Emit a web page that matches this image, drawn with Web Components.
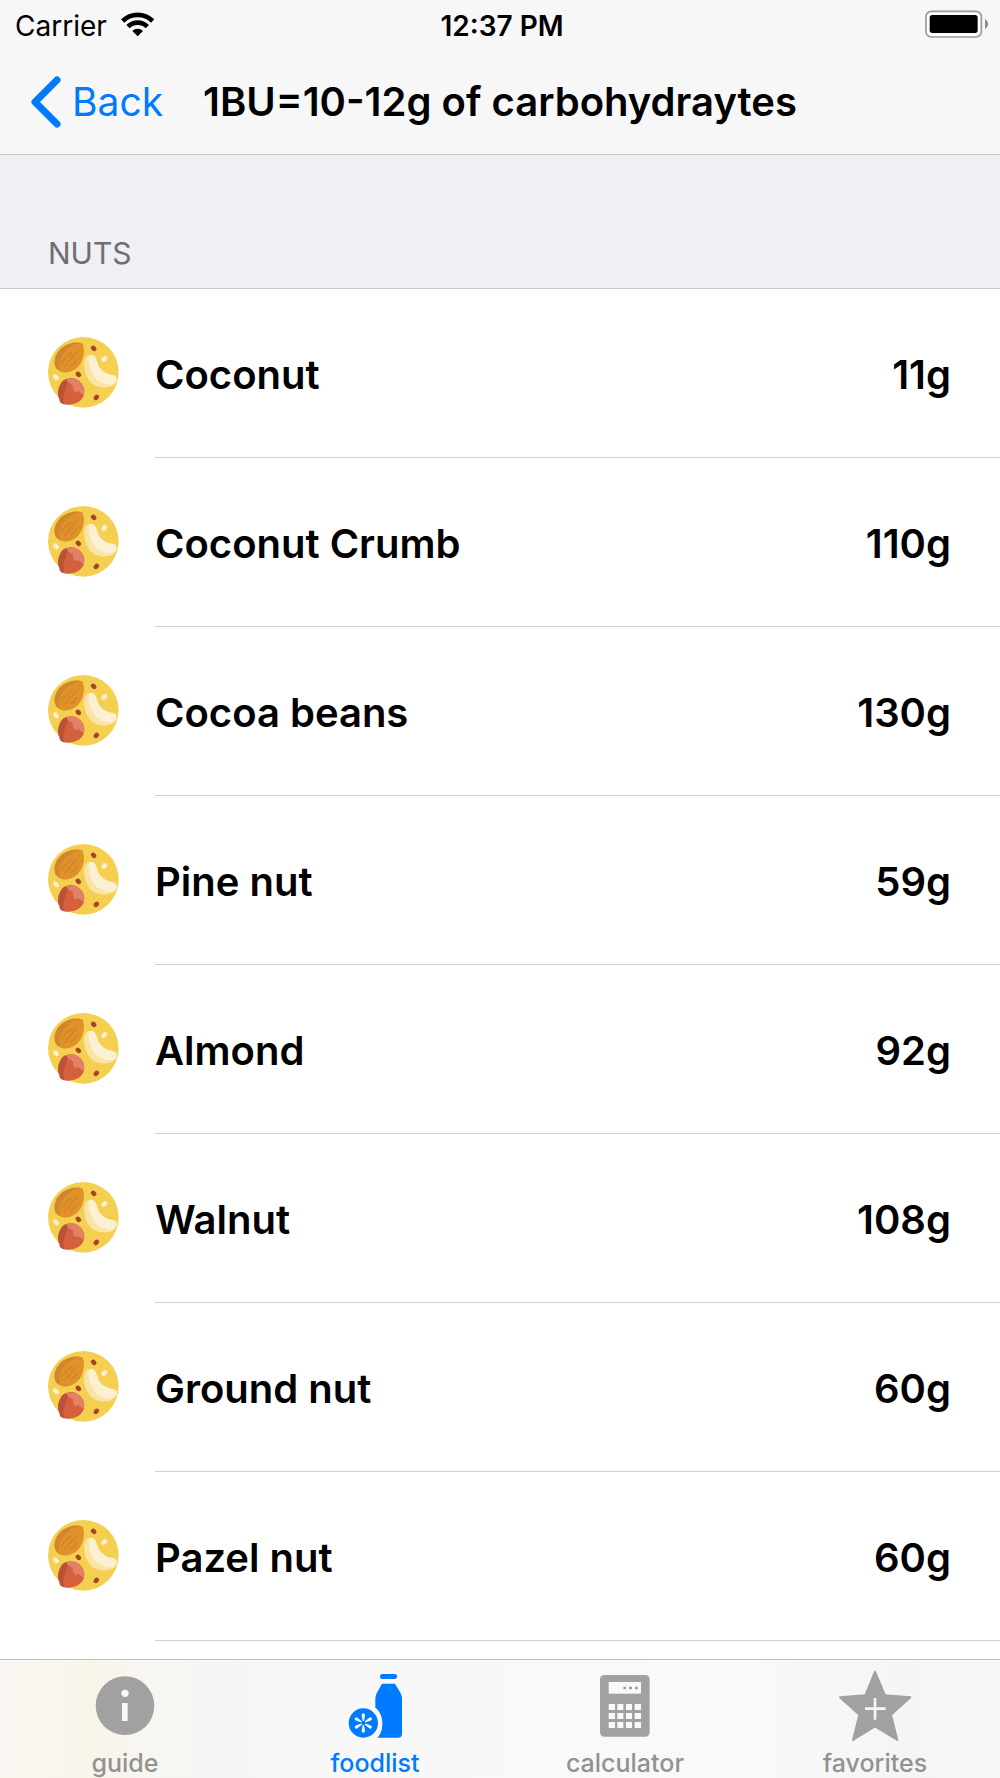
<!DOCTYPE html>
<html lang="en">
<head>
  <meta charset="utf-8">
  <meta name="viewport" content="width=device-width, initial-scale=1">
  <title>Food list</title>
  <style>
    body {
      margin: 0;
      font-family: Inter, "Liberation Sans", sans-serif;
      color: #000;
      background: #fff;
    }
  </style>
</head>
<body>
  <food-app></food-app>

  <script>
    class StatusBar extends HTMLElement {
      constructor() {
        super();
        this.attachShadow({ mode: 'open' });
        this.shadowRoot.innerHTML = `<style>
            :host {
              display: grid;
              grid-template-columns: 1fr auto 1fr;
              align-items: center;
              height: 50px;
              padding: 0 11px 0 15px;
              font-size: 28px;
              line-height: 34px;
            }

            .carrier {
              display: flex;
              align-items: center;
              gap: 13px;
            }

            .carrier span, .time {
              padding-top: 2px;
            }

            .time {
              font-weight: 600;
            }

            .battery {
              justify-self: end;
            }

            svg {
              display: block;
            }
          </style>
          <div class="carrier">
            <span>Carrier</span>
            <svg width="36" height="30" viewBox="360 30 108 90" aria-hidden="true">
              <path d="M368 63A64 64 0 0 1 458 63" fill="none" stroke="#000" stroke-width="14"/>
              <path d="M384 80A41 41 0 0 1 442 80" fill="none" stroke="#000" stroke-width="14"/>
              <path d="M413 109L397 93A23 23 0 0 1 429 93Z"/>
            </svg>
          </div>
          <span class="time"><slot></slot></span>
          <svg class="battery" width="65" height="30" viewBox="1272 30 195 90" aria-hidden="true">
            <rect x="1278" y="34" width="166" height="77" rx="16" fill="#fff" stroke="#9a9a9c" stroke-width="5"/>
            <rect x="1289" y="45" width="144" height="54" rx="8"/>
            <path d="M1455 58Q1464 62 1464 72T1455 87Z" fill="#8e8e90"/>
          </svg>`;
      }
    }

    class NavBar extends HTMLElement {
      constructor() {
        super();
        this.attachShadow({ mode: 'open' });
        this.shadowRoot.innerHTML = `<style>
            :host {
              display: grid;
              grid-template-columns: 1fr auto 1fr;
              align-items: center;
              height: 104px;
              padding: 0 30px;
              line-height: 48px;
            }

            h1 {
              margin: 0;
              font-size: 40px;
              font-weight: 600;
              white-space: nowrap;
            }

            button {
              display: flex;
              align-items: center;
              gap: 10px;
              justify-self: start;
              padding: 0;
              border: 0;
              background: none;
              color: #007aff;
              font: inherit;
              font-size: 39px;
              cursor: pointer;
            }

            svg {
              display: block;
            }
          </style>
          <button type="button">
            <svg width="32" height="52" viewBox="0 0 32 52" aria-hidden="true">
              <path d="M27 4L5 26L27 48" fill="none" stroke="currentColor" stroke-width="7" stroke-linecap="round" stroke-linejoin="round"/>
            </svg>
            <span>Back</span>
          </button>
          <h1><slot></slot></h1>`;
      }
    }

    class FoodSection extends HTMLElement {
      constructor() {
        super();
        this.attachShadow({ mode: 'open' });
        this.shadowRoot.innerHTML = `<style>
            :host {
              display: block;
            }

            h2 {
              box-sizing: border-box;
              margin: 0;
              padding: 79px 48px 16px;
              border-bottom: 1px solid #c8c7cc;
              background: #efeff4;
              color: #6d6d72;
              font-size: 30px;
              font-weight: 400;
              line-height: 38px;
            }
          </style>
          <h2><slot name="title"></slot></h2>
          <div role="list"><slot></slot></div>`;
      }
    }

    class NutIcon extends HTMLElement {
      constructor() {
        super();
        this.attachShadow({ mode: 'open' });
        this.shadowRoot.innerHTML = `<style>
            :host {
              display: block;
            }

            svg {
              display: block;
            }
          </style>
          <svg width="72" height="74" viewBox="54 49 216 222" aria-hidden="true">
            <circle cx="160" cy="155" r="106" fill="#f5cf50"/>
            <path d="M157 69C164 84 163 113 147 134C129 157 97 162 81 146C66 130 73 100 94 82C112 67 143 61 157 69Z" fill="#d1862c"/>
            <path d="M157 69C164 84 163 113 147 134C132 153 112 157 94 153C82 142 86 115 104 94C119 76 140 66 157 69Z" fill="#e19129"/>
            <g fill="none" stroke="#cd842d" stroke-width="4" stroke-linecap="round">
              <path d="M95 126Q103 111 125 97"/>
              <path d="M104 138Q113 126 139 96"/>
              <path d="M122 136Q133 129 140 117"/>
            </g>
            <path d="M162 130C161 110 174 100 186 103C200 107 200 124 206 136C215 153 233 162 249 163C262 165 264 181 254 190C243 201 219 204 200 197C176 188 163 160 162 130Z" fill="#f9e4a6"/>
            <path d="M176 119C174 107 181 101 189 104C200 109 200 124 206 136C215 153 233 162 249 163C261 165 263 177 256 186C246 195 221 192 204 180C186 166 178 142 176 119Z" fill="#fbf0d1"/>
            <path d="M109 175C129 170 145 175 155 190C164 202 165 217 158 230C148 247 125 254 105 251C93 250 88 244 88 234C82 224 83 207 89 195C94 183 101 177 109 175Z" fill="#b95237"/>
            <path d="M113 174C132 171 146 176 155 190C164 202 165 217 158 230C147 247 125 254 105 251C97 242 99 225 105 210C110 196 114 186 113 174Z" fill="#d4603d"/>
            <path d="M109 176C130 170 145 175 155 190C163 201 164 213 161 223C153 219 149 210 143 212C136 219 127 209 130 197C126 188 116 192 109 176Z" fill="#e38069"/>
            <g fill="#a5432b">
              <ellipse cx="191" cy="83" rx="9" ry="7" transform="rotate(45 191 83)"/>
              <ellipse cx="145" cy="161" rx="9" ry="7" transform="rotate(45 145 161)"/>
              <ellipse cx="199" cy="230" rx="9" ry="7" transform="rotate(-45 199 230)"/>
            </g>
            <g fill="#fbf0d1">
              <ellipse cx="223" cy="115" rx="10" ry="7" transform="rotate(-45 223 115)"/>
              <ellipse cx="78" cy="170" rx="10" ry="7" transform="rotate(45 78 170)"/>
            </g>
          </svg>`;
      }
    }

    class FoodRow extends HTMLElement {
      constructor() {
        super();
        this.attachShadow({ mode: 'open' });
        this.shadowRoot.innerHTML = `<style>
            :host {
              display: flex;
              align-items: stretch;
              gap: 35px;
              height: 169px;
              padding-left: 48px;
              font-size: 40px;
              font-weight: 600;
              line-height: 48px;
            }

            nut-icon {
              align-self: center;
            }

            .content {
              flex: 1;
              display: flex;
              justify-content: space-between;
              align-items: center;
              padding: 3px 49px 0 0;
              border-bottom: 1px solid #d0d0d3;
            }
          </style>
          <nut-icon></nut-icon>
          <div class="content">
            <slot></slot>
            <slot name="weight"></slot>
          </div>`;
      }

      connectedCallback() {
        this.setAttribute('role', 'listitem');
      }
    }

    const tabIcons = {
      guide: `<svg width="76" height="76" viewBox="261 114 228 228" aria-hidden="true">
          <circle cx="375" cy="227" r="88" fill="currentColor"/>
          <circle cx="375" cy="190" r="11" fill="#faf8f1"/>
          <rect x="366" y="219" width="17" height="54" fill="#faf8f1"/>
        </svg>`,
      foodlist: `<svg width="76" height="76" viewBox="1011 114 228 228" aria-hidden="true">
          <g fill="currentColor">
            <rect x="1140" y="132" width="51" height="15" rx="7"/>
            <path d="M1146 161H1185L1202 190Q1206 198 1206 207V311Q1206 323 1194 323H1132C1144 311 1147 297 1147 279C1147 259 1139 243 1126 233V207Q1126 198 1130 190Z"/>
            <circle cx="1090" cy="279" r="44"/>
          </g>
          <g fill="#f8f8f8">
            <path id="petal" d="M1088 273L1085 256Q1085 250 1090 250T1095 256L1092 273Z"/>
            <use href="#petal" transform="rotate(60 1090 279)"/>
            <use href="#petal" transform="rotate(120 1090 279)"/>
            <use href="#petal" transform="rotate(180 1090 279)"/>
            <use href="#petal" transform="rotate(240 1090 279)"/>
            <use href="#petal" transform="rotate(300 1090 279)"/>
          </g>
        </svg>`,
      calculator: `<svg width="76" height="76" viewBox="261 114 228 228" aria-hidden="true">
          <rect x="300" y="135" width="149" height="185" rx="13" fill="currentColor"/>
          <g fill="#f9f9f9">
            <rect x="326" y="156" width="97" height="35"/>
            <path d="M326 222h19v18h-19zM352 222h18v18h-18zM378 222h18v18h-18zM404 222h19v18h-19z"/>
            <path d="M326 249h19v18h-19zM352 249h18v18h-18zM378 249h18v18h-18zM404 249h19v18h-19z"/>
            <path d="M326 276h19v18h-19zM352 276h18v18h-18zM378 276h18v18h-18zM404 276h19v18h-19z"/>
          </g>
          <path d="M370 170h8v8h-8zM387 170h9v8h-9zM405 170h8v8h-8z" fill="currentColor"/>
        </svg>`,
      favorites: `<svg width="76" height="76" viewBox="1011 114 228 228" aria-hidden="true">
          <path d="M1125 125L1155 196L1231 202L1173 254L1192 330L1125 289L1059 330L1078 254L1020 202L1096 196Z" fill="currentColor" stroke="currentColor" stroke-width="6" stroke-linejoin="round"/>
          <path d="M1125 204V269M1095 236H1157" stroke="#f7f7f7" stroke-width="8"/>
        </svg>`,
    };

    class TabItem extends HTMLElement {
      constructor() {
        super();
        this.attachShadow({ mode: 'open' });
      }

      connectedCallback() {
        this.shadowRoot.innerHTML = `<style>
            :host {
              flex: 1;
              color: #929292;
            }

            :host([selected]) {
              color: #007aff;
            }

            a {
              display: flex;
              flex-direction: column;
              align-items: center;
              gap: 5px;
              padding: 8px 0 1px;
              color: inherit;
              font-size: 25px;
              font-weight: 500;
              line-height: 28px;
              text-decoration: none;
            }

            svg {
              display: block;
              color: #a1a1a1;
            }

            :host([selected]) svg {
              color: #007aff;
            }
          </style>
          <a href="#${this.getAttribute('icon')}">
            ${tabIcons[this.getAttribute('icon')]}
            <span><slot></slot></span>
          </a>`;
        if (this.hasAttribute('selected')) {
          this.shadowRoot.querySelector('a').setAttribute('aria-current', 'page');
        }
      }
    }

    class TabBar extends HTMLElement {
      constructor() {
        super();
        this.attachShadow({ mode: 'open' });
        this.shadowRoot.innerHTML = `<style>
            :host {
              display: block;
              border-top: 1px solid #bdbdbd;
              background: linear-gradient(90deg, #faf8f2 0%, #f9f4ea 9%, #f8f6f0 14%, #f5f5f5 22%, #f8f8f8 36%, #f9f9f9 75%, #f5f5f5 90%, #f7f7f7 100%);
            }

            nav {
              display: flex;
            }
          </style>
          <nav><slot></slot></nav>`;
      }
    }

    class FoodApp extends HTMLElement {
      constructor() {
        super();
        this.foods = [
          ['Coconut', '11g'],
          ['Coconut Crumb', '110g'],
          ['Cocoa beans', '130g'],
          ['Pine nut', '59g'],
          ['Almond', '92g'],
          ['Walnut', '108g'],
          ['Ground nut', '60g'],
          ['Pazel nut', '60g'],
        ];
        this.attachShadow({ mode: 'open' });
        this.shadowRoot.innerHTML = `<style>
            :host {
              display: flex;
              flex-direction: column;
              min-height: 100vh;
            }

            header {
              border-bottom: 1px solid #c6c6c9;
              background: #f7f7f8;
            }

            main {
              flex: 1;
            }

            tab-bar {
              position: sticky;
              bottom: 0;
            }
          </style>
          <header>
            <status-bar>12:37 PM</status-bar>
            <nav-bar>1BU=10-12g of carbohydraytes</nav-bar>
          </header>
          <main>
            <food-section>
              <span slot="title">NUTS</span>
              ${this.foods.map(([name, weight]) => `<food-row><span>${name}</span><span slot="weight">${weight}</span></food-row>`).join('')}
            </food-section>
          </main>
          <tab-bar>
            <tab-item icon="guide">guide</tab-item>
            <tab-item icon="foodlist" selected>foodlist</tab-item>
            <tab-item icon="calculator">calculator</tab-item>
            <tab-item icon="favorites">favorites</tab-item>
          </tab-bar>`;
      }
    }

    customElements.define('status-bar', StatusBar);
    customElements.define('nav-bar', NavBar);
    customElements.define('nut-icon', NutIcon);
    customElements.define('food-row', FoodRow);
    customElements.define('food-section', FoodSection);
    customElements.define('tab-item', TabItem);
    customElements.define('tab-bar', TabBar);
    customElements.define('food-app', FoodApp);
  </script>
</body>
</html>
